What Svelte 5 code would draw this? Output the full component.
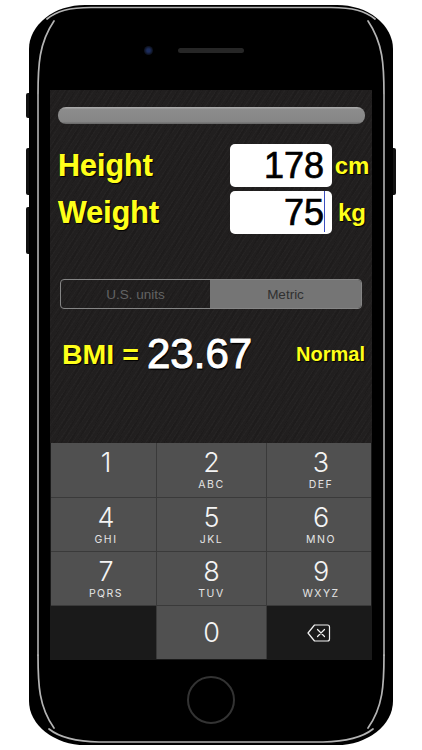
<script lang="ts">
  type Key = { digit: string; letters: string };

  const topKeys: Key[] = [
    { digit: "1", letters: "" },
    { digit: "2", letters: "ABC" },
    { digit: "3", letters: "DEF" },
    { digit: "4", letters: "GHI" },
    { digit: "5", letters: "JKL" },
    { digit: "6", letters: "MNO" },
    { digit: "7", letters: "PQRS" },
    { digit: "8", letters: "TUV" },
    { digit: "9", letters: "WXYZ" },
  ];
</script>

<div class="stage">
  <div class="phone">
    <span class="side side--mute"></span>
    <span class="side side--up"></span>
    <span class="side side--down"></span>
    <span class="side side--power"></span>
    <div class="phone__body">
      <svg class="gloss" width="364" height="740" viewBox="0 0 364 740" fill="none" stroke="#b4b4b4" stroke-width="1.7" stroke-linecap="round">
        <path d="M9 90C9 60 10 38 25 16" />
        <path d="M355 90C355 60 354 38 339 16" />
        <path d="M18 14C28 6 40 2.500 62 2.500H302C324 2.500 336 6 346 14" />
        <path d="M9 90V650M355 90V650" stroke="#8e8e8e" stroke-width="2" />
        <path d="M9 650C9 680 10 702 25 723" />
        <path d="M355 650C355 680 354 702 339 723" />
        <path d="M20 724C30 732 44 736.500 70 737H294C320 736.500 334 732 344 724" />
      </svg>

      <div class="earpiece">
        <span class="camera"></span>
        <span class="speaker"></span>
      </div>

      <main class="screen">
        <div class="calc">
          <div class="bar"></div>

          <div class="fields">
            <span class="label">Height</span>
            <div class="field">178</div>
            <span class="unit">cm</span>

            <span class="label">Weight</span>
            <div class="field field--active">75<i class="caret"></i></div>
            <span class="unit">kg</span>
          </div>

          <div class="segment">
            <span class="segment__item">U.S. units</span>
            <span class="segment__item segment__item--on">Metric</span>
          </div>

          <div class="result">
            <span class="result__label">BMI =</span>
            <span class="result__value">23.67</span>
            <span class="result__status">Normal</span>
          </div>
        </div>

        <div class="keypad">
          <div class="keypad__grid">
            {#each topKeys as key}
              <div class="key">
                <span class="key__digit">{key.digit}</span>
                <span class="key__letters">{key.letters}</span>
              </div>
            {/each}
            <div class="key key--dark"></div>
            <div class="key key--zero"><span class="key__digit">0</span></div>
            <div class="key key--dark">
              <svg width="24" height="18" viewBox="0 0 24 18" fill="none" stroke="#f2f2f2" stroke-width="1.2">
                <path d="M7.500 1H20.500a2 2 0 0 1 2 2v12a2 2 0 0 1-2 2H7.500L1 9Z" stroke-linejoin="round" />
                <path d="M10.500 5.500l7 7M17.500 5.500l-7 7" stroke-linecap="round" />
              </svg>
            </div>
          </div>
        </div>
      </main>

      <div class="home"></div>
    </div>
  </div>
</div>

<style>
  :global(body) {
    margin: 0;
    background: #fff;
  }

  .stage {
    width: 422px;
    height: 750px;
    padding: 5px 0 0 29px;
    box-sizing: border-box;
    overflow: hidden;
    font-family: "Liberation Sans", Arial, sans-serif;
  }

  .phone {
    position: relative;
    width: 364px;
    height: 740px;
  }

  .side {
    position: absolute;
    width: 4px;
    background: #111;
  }

  .side--mute {
    left: -3px;
    top: 88px;
    height: 25px;
    border-radius: 2px 0 0 2px;
  }

  .side--up {
    left: -3px;
    top: 143px;
    height: 47px;
    border-radius: 2px 0 0 2px;
  }

  .side--down {
    left: -3px;
    top: 202px;
    height: 47px;
    border-radius: 2px 0 0 2px;
  }

  .side--power {
    right: -3px;
    top: 143px;
    height: 47px;
    border-radius: 0 2px 2px 0;
  }

  .phone__body {
    position: relative;
    height: 100%;
    box-sizing: border-box;
    padding: 43px 21px 0;
    border-radius: 56px / 44px;
    background: #000;
  }

  .gloss {
    position: absolute;
    left: 0;
    top: 0;
    filter: blur(0.5px);
    pointer-events: none;
  }

  .earpiece {
    position: relative;
    display: flex;
    align-items: center;
    height: 5px;
    margin-left: 94px;
    gap: 25px;
  }

  .camera {
    width: 9px;
    height: 9px;
    flex: none;
    border-radius: 50%;
    background: radial-gradient(circle, #1c2c5c 0 25%, #0f1526 60%, #0a0a0c 100%);
  }

  .speaker {
    width: 66px;
    height: 5px;
    border-radius: 3px;
    background: #262626;
  }

  .screen {
    position: relative;
    width: 322px;
    height: 570px;
    margin-top: 37px;
    display: flex;
    flex-direction: column;
    background-color: #211f1f;
    background-image:
      repeating-linear-gradient(125deg, rgba(255, 255, 255, 0.018) 0 1px, transparent 1px 4px),
      repeating-linear-gradient(118deg, rgba(0, 0, 0, 0.1) 0 2px, transparent 2px 7px);
  }

  .calc {
    flex: none;
    height: 353px;
    box-sizing: border-box;
    padding-top: 17px;
  }

  .bar {
    height: 17px;
    margin: 0 7px 0 8px;
    border-radius: 8px;
    background: linear-gradient(#b0b0b0 0, #8c8c8c 15%, #868686 85%, #666 100%);
  }

  .fields {
    display: grid;
    grid-template-columns: 180px 102px 1fr;
    grid-template-rows: 43px 43px;
    row-gap: 4px;
    align-items: center;
    margin-top: 20px;
  }

  .label {
    padding-left: 8px;
    font-size: 30.500px;
    font-weight: 700;
    color: #ffff1a;
    text-shadow: 1px 1px 1px #000, 0 0 0.6px #ffff1a;
  }

  .field {
    height: 43px;
    display: flex;
    align-items: center;
    justify-content: flex-end;
    position: relative;
    padding-right: 8px;
    border-radius: 5px;
    background: #fff;
    color: #000;
    font-size: 36px;
    -webkit-text-stroke: 0.7px #000;
  }

  .caret {
    position: absolute;
    right: 7px;
    top: 0;
    width: 1.5px;
    height: 41px;
    background: #3c4fc0;
  }

  .unit {
    justify-self: center;
    font-size: 24px;
    font-weight: 700;
    color: #ffff1a;
    text-shadow: 1px 1px 1px #000;
  }

  .segment {
    display: grid;
    grid-template-columns: 149px 1fr;
    height: 30px;
    margin: 45px 10px 0;
    box-sizing: border-box;
    border: 1px solid #858585;
    border-radius: 4px;
    overflow: hidden;
    font-size: 13.500px;
  }

  .segment__item {
    display: flex;
    align-items: center;
    justify-content: center;
    color: #636363;
  }

  .segment__item--on {
    background: #757575;
    color: #303030;
  }

  .result {
    display: flex;
    align-items: center;
    margin-top: 24px;
    padding-left: 12px;
  }

  .result__label {
    width: 85px;
    font-size: 28.500px;
    font-weight: 700;
    color: #ffff1a;
    text-shadow: 1px 1px 1px #000;
  }

  .result__value {
    font-size: 42px;
    line-height: 42px;
    color: #fff;
    -webkit-text-stroke: 1px #fff;
    text-shadow: 1px 2px 1px #000;
  }

  .result__status {
    margin-left: auto;
    padding-right: 7px;
    font-size: 20px;
    font-weight: 700;
    color: #ffff1a;
    text-shadow: 1px 1px 1px #000;
  }

  .keypad {
    flex: 1;
    padding: 0 1px 1px;
    background: #1a1a1a;
    font-family: Inter, "Liberation Sans", sans-serif;
  }

  .keypad__grid {
    display: grid;
    grid-template-columns: 105px 109px 104px;
    grid-template-rows: 54px 53px 53px 53px;
    gap: 1px;
    background: #3a3a3a;
  }

  .key {
    display: flex;
    flex-direction: column;
    align-items: center;
    padding-top: 5px;
    box-sizing: border-box;
    background: #505050;
    color: #f4f4f4;
  }

  .key:nth-child(3n + 1) {
    padding-left: 5px;
  }

  .key:nth-child(3n) {
    padding-left: 4px;
  }

  .key__digit {
    font-size: 27px;
    font-weight: 300;
    line-height: 30px;
  }

  .key__letters {
    font-size: 10.500px;
    font-weight: 400;
    letter-spacing: 1.500px;
    line-height: 13px;
    color: #e4e4e4;
  }

  .key.key--dark {
    background: #1a1a1a;
    justify-content: center;
    padding: 0;
  }

  .key--zero {
    justify-content: center;
    padding-top: 0;
  }

  .home {
    position: absolute;
    left: 158px;
    top: 671px;
    width: 48px;
    height: 48px;
    box-sizing: border-box;
    border: 2px solid #333;
    border-radius: 50%;
  }
</style>
